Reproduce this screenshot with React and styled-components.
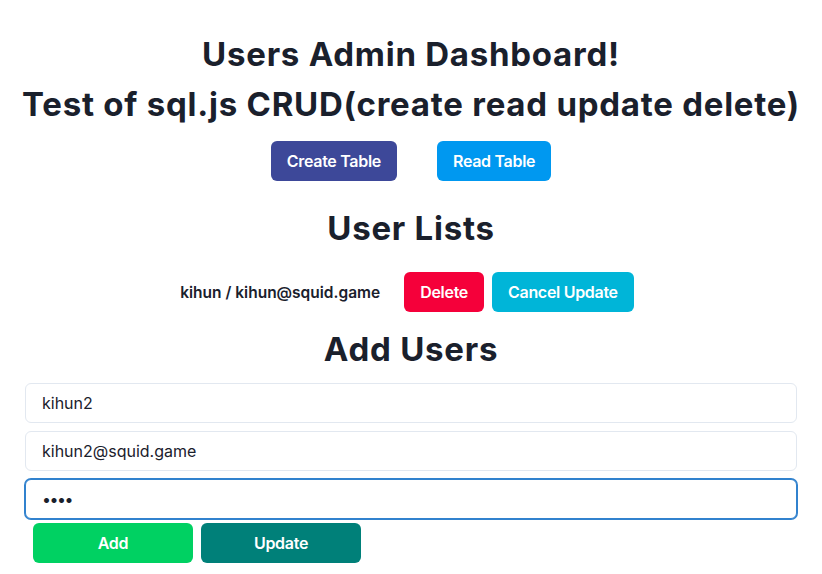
import React, { useState } from 'react'
import styled, { createGlobalStyle } from 'styled-components'

const GlobalStyle = createGlobalStyle`
  * { box-sizing: border-box; }
  body {
    margin: 0;
    background: #ffffff;
    font-family: Inter, "Noto Sans", sans-serif;
    color: #1a202c;
  }
`

const Page = styled.div`
  display: flex;
  flex-direction: column;
  align-items: center;
  padding: 35px 25px 0;
`

const Title = styled.h1`
  margin: 0 0 ${(props) => props.$gap || 0}px;
  font-size: 33px;
  line-height: 38.4px;
  font-weight: 700;
  text-align: center;
  letter-spacing: 0.75px;
  white-space: nowrap;
`

const ButtonRow = styled.div`
  display: flex;
  justify-content: center;
  align-items: center;
  gap: ${(props) => props.$gap}px;
  margin-bottom: ${(props) => props.$bottom || 0}px;
  padding-right: ${(props) => props.$shift || 0}px;
`

const Button = styled.button`
  height: 40px;
  padding: 0 16px;
  min-width: ${(props) => props.$width || 0}px;
  border: none;
  border-radius: 6px;
  background: ${(props) => props.$bg};
  color: #ffffff;
  font-family: Inter, "Noto Sans", sans-serif;
  font-size: 16px;
  font-weight: 600;
  letter-spacing: -0.3px;
  cursor: pointer;
`

const UserText = styled.span`
  font-size: 15.5px;
  font-weight: 600;
  margin-right: 16px;
`

const Form = styled.div`
  align-self: stretch;
  display: flex;
  flex-direction: column;
  gap: 8px;
`

const Input = styled.input`
  width: 100%;
  height: 40px;
  padding: 0 16px;
  border: 1px solid #e2e8f0;
  border-radius: 6px;
  font-family: Inter, "Noto Sans", sans-serif;
  font-size: 16px;
  color: #1a202c;
  outline: none;
  background: #fff;
  letter-spacing: ${(props) => (props.type === 'password' ? '-1.5px' : 'normal')};

  &:focus {
    border-color: #3182ce;
    box-shadow: 0 0 0 1px #3182ce;
  }
`

const FormButtons = styled.div`
  display: flex;
  gap: 8px;
  margin-top: -4px;
  padding-left: 8px;
`

export default function App() {
  const [name, setName] = useState('kihun2')
  const [email, setEmail] = useState('kihun2@squid.game')
  const [pass, setPass] = useState('1234')

  return (
    <>
      <GlobalStyle />
      <Page>
        <Title $gap={12}>Users Admin Dashboard!</Title>
        <Title $gap={17}>Test of sql.js CRUD(create read update delete)</Title>
        <ButtonRow $gap={40} $bottom={28}>
          <Button $bg="#3d4899">Create Table</Button>
          <Button $bg="#0098f0">Read Table</Button>
        </ButtonRow>
        <Title $gap={25}>User Lists</Title>
        <ButtonRow $gap={8} $bottom={18} $shift={8}>
          <UserText>kihun / kihun@squid.game</UserText>
          <Button $bg="#f5003a">Delete</Button>
          <Button $bg="#00b5d8">Cancel Update</Button>
        </ButtonRow>
        <Title $gap={14}>Add Users</Title>
        <Form>
          <Input value={name} onChange={(e) => setName(e.target.value)} />
          <Input value={email} onChange={(e) => setEmail(e.target.value)} />
          <Input type="password" autoFocus value={pass} onChange={(e) => setPass(e.target.value)} />
          <FormButtons>
            <Button $bg="#00d162" $width={160}>Add</Button>
            <Button $bg="#008079" $width={160}>Update</Button>
          </FormButtons>
        </Form>
      </Page>
    </>
  )
}
